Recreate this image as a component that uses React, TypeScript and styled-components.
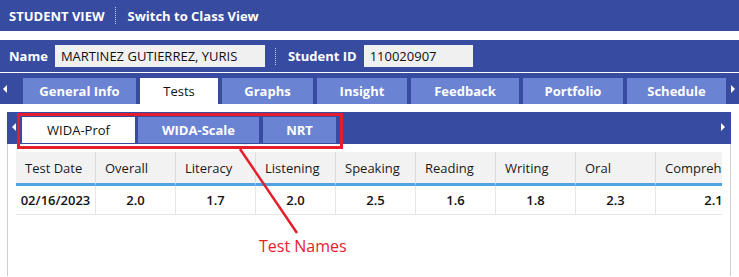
import React from 'react';
import styled, { createGlobalStyle } from 'styled-components';

const GlobalStyle = createGlobalStyle`
  body {
    margin: 0;
    background: #ffffff;
    font-family: 'Open Sans', 'DejaVu Sans', sans-serif;
  }
`;

const BLUE = '#374ba1';
const TAB = '#6b83d3';
const RED = '#e41e2d';

const Page = styled.div`
  position: relative;
  width: 739px;
  height: 277px;
  overflow: hidden;
`;

const TopBar = styled.div`
  height: 31px;
  background: ${BLUE};
  display: flex;
  align-items: center;
  padding-left: 9px;
  color: #ffffff;
  font-weight: 700;
  font-size: 13px;
`;

const Divider = styled.span`
  display: inline-block;
  height: 17px;
  border-left: 1px dotted #c9d0ea;
  margin: 0 12px 0 10px;
`;

const InfoBar = styled.div`
  margin-top: 9px;
  height: 32px;
  background: ${BLUE};
  display: flex;
  align-items: center;
  padding-left: 9px;
  color: #ffffff;
  font-weight: 700;
  font-size: 13px;
`;

const Field = styled.div<{ $width: number }>`
  width: ${(p) => p.$width}px;
  height: 22px;
  box-sizing: border-box;
  background: #f0f0f0;
  color: #111111;
  font-weight: 500;
  font-size: 13px;
  display: flex;
  align-items: center;
  padding-left: 6px;
  margin-left: 7px;
`;

const TabBar = styled.div`
  height: 31px;
  border-top: 1px solid #ffffff;
  background: ${BLUE};
  display: flex;
  align-items: flex-end;
`;

const Arrow = styled.span<{ $side: 'left' | 'right' }>`
  width: 0;
  height: 0;
  border-top: 4px solid transparent;
  border-bottom: 4px solid transparent;
  ${(p) =>
    p.$side === 'left'
      ? 'border-right: 4px solid #ffffff;'
      : 'border-left: 4px solid #ffffff;'}
  align-self: center;
`;

const TabRow = styled.div<{ $gap: number; $start: number }>`
  display: flex;
  gap: ${(p) => p.$gap}px;
  margin-left: ${(p) => p.$start}px;
  align-items: flex-end;
  height: 100%;
`;

const Tab = styled.div<{ $width: number; $active?: boolean }>`
  width: ${(p) => p.$width}px;
  height: 26px;
  background: ${(p) => (p.$active ? '#ffffff' : TAB)};
  color: ${(p) => (p.$active ? '#111111' : '#ffffff')};
  font-weight: ${(p) => (p.$active ? 500 : 700)};
  font-size: 13px;
  display: flex;
  align-items: center;
  justify-content: center;
`;

const Panel = styled.div`
  margin: 8px 0 0 7px;
  width: 724px;
  height: 164px;
  box-sizing: border-box;
  border-left: 1px solid #cfcfcf;
  border-right: 1px solid #cfcfcf;
`;

const SubBar = styled.div`
  height: 32px;
  margin: 0 -1px;
  background: ${BLUE};
  display: flex;
  align-items: flex-end;
  padding-left: 5px;
  padding-right: 6px;
  padding-bottom: 1px;
  box-sizing: border-box;
`;

const Grid = styled.div`
  margin: 8px 0 0 8px;
  width: 706px;
  overflow: hidden;
  display: grid;
  grid-template-columns: repeat(8, 80px) 116px;
`;

const Head = styled.div`
  height: 31px;
  background: #f2f2f2;
  border-right: 1px solid #dddddd;
  border-bottom: 3px solid #4ea3e2;
  display: flex;
  align-items: center;
  padding-left: 9px;
  font-size: 13px;
  font-weight: 500;
  color: #1a1a1a;
  white-space: nowrap;
  overflow: hidden;
`;

const Cell = styled.div`
  height: 28px;
  border-right: 1px solid #e6e6e6;
  border-bottom: 1px solid #e6e6e6;
  display: flex;
  align-items: center;
  justify-content: center;
  font-size: 13px;
  font-weight: 600;
  color: #111111;
`;

const Callout = styled.div`
  position: absolute;
  left: 17px;
  top: 113px;
  width: 326px;
  height: 36px;
  box-sizing: border-box;
  border: 3px solid ${RED};
`;

const Pointer = styled.svg`
  position: absolute;
  left: 0;
  top: 0;
  pointer-events: none;
`;

const CalloutLabel = styled.div`
  position: absolute;
  left: 259px;
  top: 235px;
  color: ${RED};
  font-size: 16px;
`;

const mainTabs: Array<[string, number]> = [
  ['General Info', 113],
  ['Tests', 78],
  ['Graphs', 91],
  ['Insight', 90],
  ['Feedback', 108],
  ['Portfolio', 100],
  ['Schedule', 99],
];

const headers = ['Test Date', 'Overall', 'Literacy', 'Listening', 'Speaking', 'Reading', 'Writing', 'Oral', 'Comprehension'];
const row = ['02/16/2023', '2.0', '1.7', '2.0', '2.5', '1.6', '1.8', '2.3', '2.1'];

const App = () => {
  return (
    <Page>
      <GlobalStyle />
      <TopBar>
        STUDENT VIEW
        <Divider />
        Switch to Class View
      </TopBar>

      <InfoBar>
        Name
        <Field $width={210}>MARTINEZ GUTIERREZ, YURIS</Field>
        <Divider />
        Student ID
        <Field $width={109}>110020907</Field>
      </InfoBar>

      <TabBar>
        <Arrow $side="left" style={{ marginLeft: 3 }} />
        <TabRow $gap={4} $start={16}>
          {mainTabs.map(([label, w]) => (
            <Tab key={label} $width={w} $active={label === 'Tests'}>
              {label}
            </Tab>
          ))}
        </TabRow>
        <Arrow $side="right" style={{ marginLeft: 5 }} />
      </TabBar>

      <Panel>
        <SubBar>
          <Arrow $side="left" style={{ marginBottom: 1 }} />
          <TabRow $gap={3} $start={6}>
            <Tab $width={113} $active>
              WIDA-Prof
            </Tab>
            <Tab $width={121}>WIDA-Scale</Tab>
            <Tab $width={73} style={{ marginLeft: 1 }}>
              NRT
            </Tab>
          </TabRow>
          <Arrow $side="right" style={{ marginLeft: 'auto', marginBottom: 1 }} />
        </SubBar>

        <Grid>
          {headers.map((h) => (
            <Head key={h}>{h}</Head>
          ))}
          {row.map((v, i) => (
            <Cell key={i}>{v}</Cell>
          ))}
        </Grid>
      </Panel>

      <Callout />
      <Pointer width="739" height="277">
        <line x1="240" y1="149" x2="297" y2="233" stroke={RED} strokeWidth="2.5" />
      </Pointer>
      <CalloutLabel>Test Names</CalloutLabel>
    </Page>
  );
};

export default App;
